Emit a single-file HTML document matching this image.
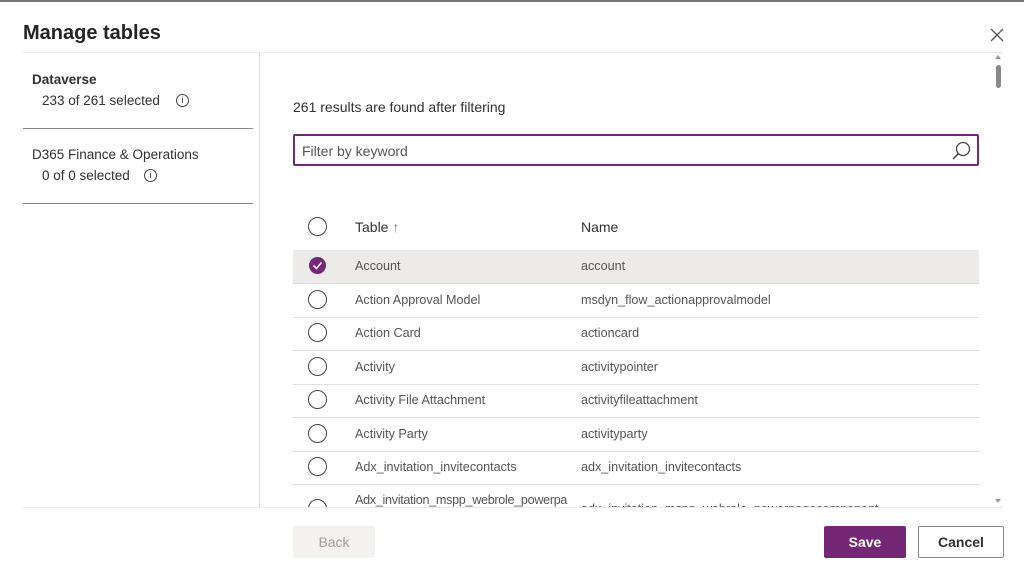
<!DOCTYPE html><html><head><style>
*{margin:0;padding:0;box-sizing:border-box}
body{width:1024px;height:572px;background:#fff;font-family:"Liberation Sans",sans-serif;color:#323130;position:relative;overflow:hidden}
.a{position:absolute}
.t{font-size:12.6px;white-space:nowrap}
.rad{position:absolute;width:19px;height:19px;border:1.3px solid #444;border-radius:50%}
.hl{position:absolute;left:293px;width:686px;height:1px;background:#e1dfdd}
.cl{color:#555}
</style></head><body>
<div class="a" style="left:0;top:0;width:1024px;height:2px;background:#777"></div>
<div class="a" style="left:23px;top:22px;font-size:20px;font-weight:bold;color:#252423">Manage tables</div>
<svg class="a" style="left:990px;top:28px" width="14" height="14"><path d="M1 1L13 13M13 1L1 13" stroke="#555" stroke-width="1.3"/></svg>
<div class="a" style="left:23px;top:52px;width:980px;height:1px;background:#edebe9"></div>
<div class="a" style="left:259px;top:53px;width:1px;height:454px;background:#e1dfdd"></div>
<div class="a t" style="left:32px;top:72px;font-weight:bold;font-size:13.5px">Dataverse</div>
<div class="a t" style="left:42px;top:93px;font-size:13.5px">233 of 261 selected</div>
<div class="a" style="left:176px;top:94px;width:13px;height:13px;border:1px solid #444;border-radius:50%;font-size:9px;text-align:center;line-height:11px">i</div>
<div class="a" style="left:23px;top:128px;width:230px;height:1px;background:#8a8886"></div>
<div class="a t" style="left:32px;top:147px;font-size:13.5px">D365 Finance &amp; Operations</div>
<div class="a t" style="left:42px;top:168px;font-size:13.5px">0 of 0 selected</div>
<div class="a" style="left:144px;top:169px;width:13px;height:13px;border:1px solid #444;border-radius:50%;font-size:9px;text-align:center;line-height:11px">i</div>
<div class="a" style="left:23px;top:203px;width:230px;height:1px;background:#8a8886"></div>
<div class="a t" style="left:293px;top:99px;font-size:14px">261 results are found after filtering</div>
<div class="a" style="left:293px;top:134px;width:686px;height:32px;border:2px solid #742774;border-radius:2px"></div>
<div class="a t" style="left:302px;top:143px;font-size:14px;color:#555">Filter by keyword</div>
<svg class="a" style="left:951px;top:140px" width="22" height="22"><circle cx="12" cy="9" r="6.5" fill="none" stroke="#444" stroke-width="1.3"/><path d="M7.3 13.7L2 19" stroke="#444" stroke-width="1.5"/></svg>
<div class="rad" style="left:308px;top:217px"></div>
<div class="a t" style="left:355px;top:219px;font-size:14px">Table <span style="color:#777">↑</span></div>
<div class="a t" style="left:581px;top:219px;font-size:14px">Name</div>
<div class="a" style="left:293px;top:250px;width:686px;height:33px;background:#edebe9"></div>
<div class="a" style="left:309px;top:257px;width:17px;height:17px;border-radius:50%;background:#742774"></div>
<svg class="a" style="left:309px;top:257px" width="17" height="17"><path d="M4.5 8.5L7.5 11.5L12.5 5.5" fill="none" stroke="#fff" stroke-width="1.6"/></svg>
<div class="a t cl" style="left:355px;top:259px">Account</div><div class="a t cl" style="left:581px;top:259px">account</div>
<div class="hl" style="top:283px"></div>
<div class="rad" style="left:308px;top:290px"></div><div class="a t cl" style="left:355px;top:293px">Action Approval Model</div><div class="a t cl" style="left:581px;top:293px">msdyn_flow_actionapprovalmodel</div>
<div class="hl" style="top:317px"></div>
<div class="rad" style="left:308px;top:323px"></div><div class="a t cl" style="left:355px;top:326px">Action Card</div><div class="a t cl" style="left:581px;top:326px">actioncard</div>
<div class="hl" style="top:350px"></div>
<div class="rad" style="left:308px;top:357px"></div><div class="a t cl" style="left:355px;top:360px">Activity</div><div class="a t cl" style="left:581px;top:360px">activitypointer</div>
<div class="hl" style="top:384px"></div>
<div class="rad" style="left:308px;top:390px"></div><div class="a t cl" style="left:355px;top:393px">Activity File Attachment</div><div class="a t cl" style="left:581px;top:393px">activityfileattachment</div>
<div class="hl" style="top:417px"></div>
<div class="rad" style="left:308px;top:424px"></div><div class="a t cl" style="left:355px;top:427px">Activity Party</div><div class="a t cl" style="left:581px;top:427px">activityparty</div>
<div class="hl" style="top:451px"></div>
<div class="rad" style="left:308px;top:457px"></div><div class="a t cl" style="left:355px;top:460px">Adx_invitation_invitecontacts</div><div class="a t cl" style="left:581px;top:460px">adx_invitation_invitecontacts</div>
<div class="hl" style="top:484px"></div>
<div class="a" style="left:293px;top:485px;width:700px;height:22px;overflow:hidden">
<div class="rad" style="left:15px;top:14px"></div><div class="a t cl" style="left:62px;top:8px;letter-spacing:-0.3px">Adx_invitation_mspp_webrole_powerpa</div><div class="a t cl" style="left:288px;top:17px">adx_invitation_mspp_webrole_powerpagecomponent</div></div>
<div class="a" style="left:996px;top:65px;width:5px;height:23px;background:#888;border-radius:3px"></div>
<div class="a" style="left:995px;top:55px;width:0;height:0;border-left:3px solid transparent;border-right:3px solid transparent;border-bottom:4px solid #999"></div>
<div class="a" style="left:995px;top:499px;width:0;height:0;border-left:3px solid transparent;border-right:3px solid transparent;border-top:4px solid #999"></div>
<div class="a" style="left:23px;top:507px;width:980px;height:1px;background:#edebe9"></div>
<div class="a" style="left:293px;top:526px;width:82px;height:32px;background:#f3f2f1;border-radius:2px;color:#a19f9d;font-size:14px;text-align:center;line-height:32px">Back</div>
<div class="a" style="left:824px;top:526px;width:82px;height:32px;background:#742774;border-radius:2px;color:#fff;font-size:14px;font-weight:bold;text-align:center;line-height:32px">Save</div>
<div class="a" style="left:918px;top:526px;width:86px;height:32px;border:1px solid #8a8886;border-radius:2px;font-size:14px;font-weight:bold;text-align:center;line-height:30px">Cancel</div>
</body></html>
